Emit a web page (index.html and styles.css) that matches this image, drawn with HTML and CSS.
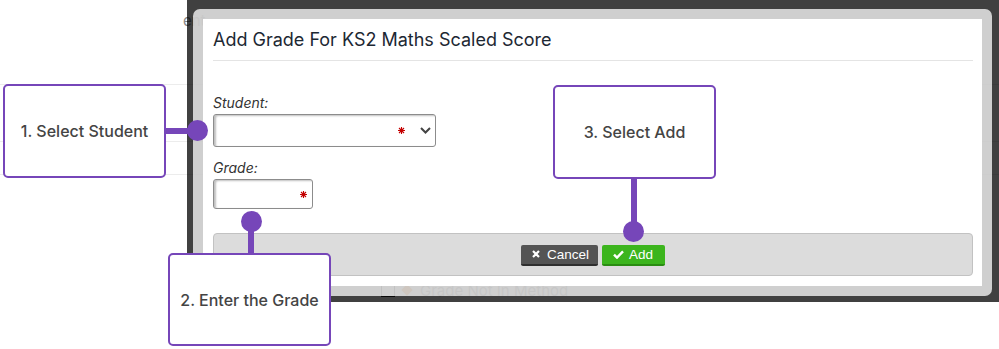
FILE: index.html
```html
<!DOCTYPE html>
<html lang="en">

<head>
    <meta charset="UTF-8">
    <meta name="viewport" content="width=device-width, initial-scale=1.0">
    <title>Add Grade</title>
    <link rel="stylesheet" href="styles.css">
</head>

<body>
    <!-- page behind the dialog -->
    <div class="page">
        <div class="page-head"><span class="ghost-text">ent</span></div>
        <div class="page-row row-a"></div>
        <div class="page-row row-b"></div>
        <div class="page-row row-c"></div>
        <div class="ghost-row">
            <span class="ghost-check"></span>
            <span class="ghost-diamond"></span>
            <span>Grade Not In Method</span>
        </div>
    </div>

    <div class="overlay">
        <div class="dialog">
            <div class="dialog-head">
                <h2>Add Grade For KS2 Maths Scaled Score</h2>
            </div>
            <div class="dialog-body">
                <label class="field-label">Student:</label>
                <div class="field select-field">
                    <svg class="req" width="7" height="7" viewBox="0 0 7 7"><path d="M3.5 0v7M0 3.5h7M1 1l5 5M6 1L1 6" stroke="#c40000" stroke-width="1.1"/></svg>
                    <svg class="chev" width="11" height="7" viewBox="0 0 11 7"><path d="M1 1l4.5 4.5L10 1" fill="none" stroke="#444" stroke-width="2"/></svg>
                </div>
                <label class="field-label grade-label">Grade:</label>
                <div class="field grade-field">
                    <svg class="req" width="7" height="7" viewBox="0 0 7 7"><path d="M3.5 0v7M0 3.5h7M1 1l5 5M6 1L1 6" stroke="#c40000" stroke-width="1.1"/></svg>
                </div>
            </div>
            <div class="dialog-foot">
                <button class="btn btn-cancel">
                    <svg width="8" height="8" viewBox="0 0 8 8"><path d="M1 1l6 6M7 1L1 7" stroke="#fff" stroke-width="2.2"/></svg>
                    Cancel
                </button>
                <button class="btn btn-add">
                    <svg width="11" height="9" viewBox="0 0 11 9"><path d="M1 4.6l3 3L10 1.4" fill="none" stroke="#fff" stroke-width="2.4"/></svg>
                    Add
                </button>
            </div>
        </div>
    </div>

    <!-- annotations -->
    <div class="callout callout-1">1. Select Student<span class="stem"></span><span class="dot"></span></div>
    <div class="callout callout-2">2. Enter the Grade<span class="stem"></span><span class="dot"></span></div>
    <div class="callout callout-3">3. Select Add<span class="stem"></span><span class="dot"></span></div>
</body>

</html>
```

FILE: styles.css
```css
* {
    margin: 0;
    padding: 0;
    box-sizing: border-box;
}

body {
    width: 999px;
    height: 349px;
    position: relative;
    overflow: hidden;
    background: #fff;
    font-family: Inter, "Liberation Sans", sans-serif;
}

/* page behind */

.page-head {
    height: 84px;
    padding: 10px 0 0 183px;
}

.ghost-text {
    color: #888;
    font-size: 15px;
}

.page-row {
    border-top: 1px solid #ececec;
}

.row-a {
    height: 57px;
}

.row-b {
    height: 33px;
}

.row-c {
    height: 108px;
}

.ghost-row {
    display: flex;
    align-items: center;
    gap: 6px;
    padding-left: 381px;
    height: 16px;
    color: #777;
    font-size: 15px;
}

.ghost-check {
    width: 14px;
    height: 13px;
    border: 1px solid #222;
    background: #fff;
}

.ghost-diamond {
    width: 8px;
    height: 8px;
    margin: 0 3px 0 2px;
    background: #f07000;
    transform: rotate(45deg);
}

/* dialog */

.overlay {
    position: absolute;
    left: 187px;
    top: 0;
    width: 812px;
    height: 302px;
    padding: 9px 7px 6px 6px;
    background: rgba(0, 0, 0, .75);
}

.dialog {
    height: 100%;
    background: #fff;
    background-clip: padding-box;
    border: 10px solid rgba(255, 255, 255, .75);
    border-radius: 7px;
    padding: 0 9px 0 10px;
}

.dialog-head {
    padding: 9px 0 8px;
    border-bottom: 1px solid #e4e4e4;
}

.dialog-head h2 {
    font-size: 18px;
    line-height: 24px;
    font-weight: 400;
    color: #1d2833;
}

.dialog-body {
    padding-top: 32px;
}

.field-label {
    display: block;
    font-size: 14px;
    line-height: 20px;
    font-style: italic;
    color: #333;
    margin-bottom: 1px;
}

.grade-label {
    margin-top: 11px;
}

.field {
    display: flex;
    align-items: center;
    justify-content: flex-end;
    border: 1px solid #8c8c8c;
    border-radius: 3px;
    box-shadow: inset 2px 1px 2px rgba(0, 0, 0, .25);
    background: #fff;
}

.select-field {
    width: 223px;
    height: 33px;
    padding-right: 4px;
    gap: 15px;
}

.grade-field {
    width: 100px;
    height: 30px;
    padding-right: 5px;
}

.dialog-foot {
    margin-top: 24px;
    height: 43px;
    display: flex;
    align-items: center;
    justify-content: center;
    gap: 4px;
    background: #dcdcdc;
    border: 1px solid #c2c2c2;
    border-radius: 4px;
}

.btn {
    display: flex;
    align-items: center;
    gap: 7px;
    height: 21px;
    border: 0;
    border-radius: 2px;
    color: #fff;
    font-family: "Liberation Sans", Arial, sans-serif;
    font-size: 13.5px;
    padding: 0 9px 0 11px;
    margin-top: 1px;
}

.btn-cancel {
    background: #545454;
    border-bottom: 2px solid #2f2f2f;
}

.btn-add {
    background: #3cb51d;
    border-bottom: 2px solid #2a8c12;
    padding-right: 12px;
    gap: 5px;
}

/* annotations */

.callout {
    position: absolute;
    width: 163px;
    height: 94px;
    display: flex;
    align-items: center;
    justify-content: center;
    background: #fff;
    border: 2px solid #7646b9;
    border-radius: 5px;
    color: #444;
    font-size: 16px;
    font-weight: 500;
}

.callout-1 {
    left: 3px;
    top: 84px;
}

.callout-2 {
    left: 168px;
    top: 253px;
    height: 93px;
}

.callout-3 {
    left: 553px;
    top: 85px;
}

.stem,
.dot {
    position: absolute;
    background: #7646b9;
}

.dot {
    width: 21px;
    height: 21px;
    border-radius: 50%;
}

.callout-1 .stem {
    left: 161px;
    top: 42px;
    width: 30px;
    height: 6px;
}

.callout-1 .dot {
    left: 182px;
    top: 34px;
}

.callout-2 .stem {
    left: 78px;
    top: -32px;
    width: 6px;
    height: 32px;
}

.callout-2 .dot {
    left: 71px;
    top: -44px;
}

.callout-3 .stem {
    left: 76px;
    top: 90px;
    width: 6px;
    height: 50px;
}

.callout-3 .dot {
    left: 68px;
    top: 134px;
}
```
